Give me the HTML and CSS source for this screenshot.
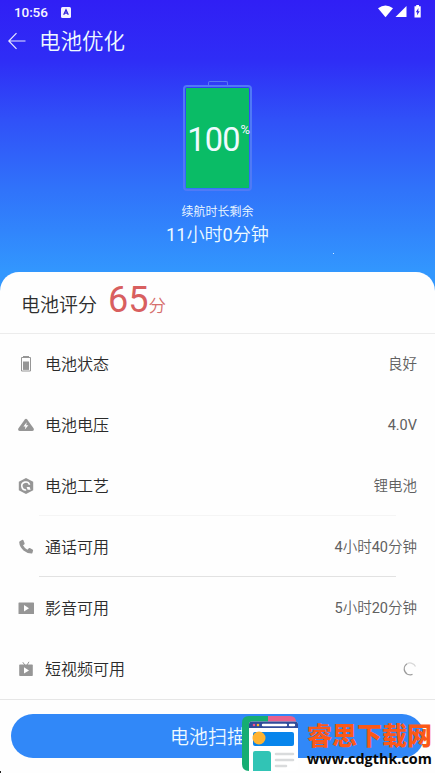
FILE: index.html
```html
<!DOCTYPE html>
<html lang="zh-CN">
<head>
<meta charset="utf-8">
<title>电池优化</title>
<link rel="stylesheet" href="styles.css">
</head>
<body>
<div class="screen">
  <header class="hero">
    <div class="status">
      <span class="time">10:56</span>
      <svg class="app-badge" width="10" height="11" viewBox="0 0 10 11"><rect width="10" height="11" rx="1.5" fill="#f4f2ff"/><path d="M2.7 7.8 5 2.8 7.3 7.8M3.6 6.2h2.8" fill="none" stroke="#3022d8" stroke-width="1.3"/></svg>
      <svg class="signals" width="45" height="14" viewBox="0 0 45 14" fill="#fff"><path d="M0 3.2Q7.5-2.2 15 3.2L7.5 12.2z"/><path d="M28.5 1v11H17.5z"/><path d="M36.5 1.2h1.7V0h2.8v1.2h1.7v11.3h-6.2z"/><path d="m40.5 3-2.7 4.2h1.5L38.9 10.5l2.8-4.3h-1.5z" fill="#3022e8"/></svg>
    </div>
    <div class="titlebar">
      <svg width="18" height="18" viewBox="0 0 18 18" fill="none" stroke="#e8e8ff" stroke-width="1.2"><path d="M17.5 9H1M8.5 1.2.8 9l7.7 7.8"/></svg>
      <h1>电池优化</h1>
    </div>
    <div class="battery">
      <div class="cap"></div>
      <div class="cell"><div class="charge"><span class="level">100</span><span class="percent">%</span></div></div>
    </div>
    <div class="remain-label">续航时长剩余</div>
    <div class="remain"><b>11</b>小时<b>0</b>分钟</div>
    <i class="speck"></i>
  </header>
  <main class="panel">
    <div class="score"><span class="score-label">电池评分</span><span class="score-num">65</span><span class="score-unit">分</span></div>
    <ul class="rows">
      <li><svg class="icon" viewBox="0 0 16 16" fill="#969696"><path d="M5 0h6v1.5H5z"/><path d="M3.5 1.5h9v13.5h-9z" fill="none" stroke="#969696"/><path d="M5 5.5h6v8.4H5z"/></svg><span class="name">电池状态</span><span class="value">良好</span></li>
      <li><svg class="icon" viewBox="0 0 16 16" fill="#969696"><path d="M6.8 2.4Q8 1 9.2 2.4L15.7 11.5Q16.3 14 14 14H2Q-.3 14 .3 11.5z"/><path d="M8.7 5.2 5.4 9.4h2.1l-.7 3.2 3.6-4.3H8.2z" fill="#fff"/></svg><span class="name">电池电压</span><span class="value"><b>4.0V</b></span></li>
      <li class="faint"><svg class="icon" viewBox="0 0 16 16"><path d="M8 0 15.2 3.8v8.4L8 16 .8 12.2V3.8z" fill="#969696"/><path d="M11.6 6.8A4 4 0 1 0 8.2 12" fill="none" stroke="#fff" stroke-width="1.6"/><path d="M8.6 9h3l1 2.8H9.6z" fill="#fff"/></svg><span class="name">电池工艺</span><span class="value">锂电池</span></li>
      <li class="ruled"><svg class="icon" viewBox="0 0 16 16"><path d="M1.8 2.2 4.4.8q.7-.2 1 .5l1.2 3q.2.7-.4 1.1L5 6.3q1.4 2.8 4.4 4.4l1.4-1.4q.5-.4 1-.2l2.7 1.4q.7.3.6 1l-.7 2.4q-.2.6-.9.6Q8.8 14.2 5.5 11.4 1.6 8 1.2 3.3 1.2 2.6 1.8 2.2z" fill="#969696"/></svg><span class="name">通话可用</span><span class="value"><b>4</b>小时<b>40</b>分钟</span></li>
      <li><svg class="icon" viewBox="0 0 16 16"><rect x=".5" y="2.5" width="15.5" height="11.5" rx=".6" fill="#969696"/><path d="m6 5 5 3.2L6 11.4z" fill="#fff"/></svg><span class="name">影音可用</span><span class="value"><b>5</b>小时<b>20</b>分钟</span></li>
      <li><svg class="icon" viewBox="0 0 16 16"><path d="m4.8 1.2 2 2.8M11 .8 9 4" stroke="#969696"/><rect x="1.2" y="3.6" width="13.6" height="11.4" rx=".8" fill="#969696"/><path d="m6 6.2 5 3.2-5 3.2z" fill="#fff"/></svg><span class="name">短视频可用</span><svg class="spinner" width="14" height="14" viewBox="0 0 14 14" fill="none" stroke-width="1.3"><path d="M9.5 12.4A6 6 0 0 1 4 1.8" stroke="#999"/><path d="M4 1.8A6 6 0 0 1 12.5 4.5" stroke="#d8d8d8"/></svg></li>
    </ul>
  </main>
  <footer class="actions"><button class="scan">电池扫描</button></footer>
  <div class="watermark">
    <svg width="58" height="56" viewBox="0 0 58 56">
      <path d="M8 0h20v55H8q-7 0-7-7V7Q1 0 8 0z" fill="#16ad72"/>
      <path d="M27 0h22q6 0 6 6H27z" fill="#e9608c"/>
      <path d="M11 5.5h43q3 0 3 3V51q0 4-4 4H8V8.5q0-3 3-3z" fill="#fff"/>
      <path d="M11 5.5h43q3 0 3 3V12H8V8.5q0-3 3-3z" fill="#304c9b"/>
      <circle cx="13" cy="9" r="1.3" fill="#f0528a"/><circle cx="17" cy="9" r="1.3" fill="#ffb62e"/>
      <path d="M22 9h23M49 9h4" stroke="#fff" stroke-width="2.4" stroke-linecap="round"/>
      <rect x="12" y="16" width="41" height="14" rx="2" fill="#0785ec"/>
      <circle cx="18" cy="22" r="6.5" fill="#ffb331"/>
      <path d="M14 35h13q3 0 3 3v17H12V37q0-2 2-2z" fill="#31c4b5"/>
      <path d="M35 38h17M35 44h17M35 50h10" stroke="#d9dbdc" stroke-width="2.6" stroke-linecap="round"/>
    </svg>
    <div class="brand"><strong>睿思下载网</strong><span>www.cdgthk.com</span></div>
  </div>
  <i class="corner"></i>
</div>
</body>
</html>
```
FILE: styles.css
```css
* { box-sizing: border-box; }
body { margin: 0; font-family: Roboto, "Noto Sans CJK SC", sans-serif; font-weight: 350; }
b { font-weight: 400; }
.screen { position: relative; width: 435px; height: 773px; overflow: hidden; background: #fefefe; display: flex; flex-direction: column; }
.hero { position: relative; height: 298px; flex: none; color: #effaff; background: linear-gradient(#301ff5 0, #2f2df6 60px, #3051f8 120px, #3073fa 190px, #3297fe 272px); display: flex; flex-direction: column; align-items: center; }
.status { width: 100%; height: 24px; padding: 0 13px 0 14px; display: flex; align-items: center; color: #f7f5ff; }
.time { font-size: 13.5px; font-weight: 500; line-height: 16px; width: 34px; letter-spacing: -.1px; }
.app-badge { margin-left: 13px; }
.signals { margin: 0 -1px 0 auto; }
.titlebar { width: 100%; height: 34px; padding-left: 8px; display: flex; align-items: center; gap: 13px; }
h1 { margin: 2px 0 0; font-size: 21.5px; font-weight: 350; line-height: 30px; }
.battery { margin-top: 23px; display: flex; flex-direction: column; align-items: center; }
.cap { width: 20px; height: 4px; border: 1.5px solid #5b76f5; border-bottom: 0; border-radius: 2px 2px 0 0; }
.cell { width: 69px; height: 106px; border: 2px solid #5079f6; border-radius: 4px; padding: 1px; }
.charge { height: 100%; background: #0abc66; display: flex; justify-content: center; align-items: center; white-space: nowrap; position: relative; }
.level { font-size: 32.5px; font-weight: 400; line-height: 36px; letter-spacing: -.8px; margin: 4px 8px 0 0; }
.percent { position: absolute; right: -1px; top: 34px; font-size: 13px; font-weight: 400; line-height: 16px; }
.remain-label { margin-top: 12px; font-size: 12px; line-height: 18px; }
.remain { font-size: 18.1px; line-height: 27px; }
.speck { position: absolute; left: 333px; top: 253px; width: 1px; height: 1px; background: #d4eaff; }
.panel { position: relative; margin-top: -26px; height: 427px; flex: none; background: #fefefe; border-radius: 19px 19px 0 0; }
.score { height: 62px; padding: 1px 0 0 21px; border-bottom: 1px solid #ececec; display: flex; align-items: baseline; color: #2e2e2e; line-height: 54px; }
.score-label { font-size: 19px; }
.score-num { margin-left: 11px; font-size: 36px; font-weight: 400; color: #d85f5f; }
.score-unit { font-size: 17.5px; color: #d66f6d; }
.rows { list-style: none; margin: 0; padding: 0; }
.rows li { height: 61px; padding: 0 18px; display: flex; align-items: center; position: relative; }
.icon { width: 16px; height: 16px; margin: -2px 11px 0 0; }
.name { font-size: 16px; line-height: 24px; color: #2b2b2b; }
.value { margin-left: auto; font-size: 14.5px; line-height: 24px; color: #606060; }
.faint::after, .ruled::after { content: ""; position: absolute; left: 39px; right: 39px; bottom: 1px; height: 1px; background: #f5f5f5; }
.ruled::after { background: #e2e2e2; }
.spinner { margin: -1px 0 0 auto; }
.actions { height: 74px; flex: none; border-top: 1px solid #e6e6e6; padding: 14px 11px; }
.scan { display: block; width: 100%; height: 44px; border: 0; border-radius: 22px; background: #3188f8; color: #effaff; font: 350 19px/44px Roboto, "Noto Sans CJK SC", sans-serif; padding: 2px 19px 0 0; }
.watermark { position: absolute; left: 241px; top: 716px; display: flex; }
.brand { margin-left: 8px; padding-top: 4px; display: flex; flex-direction: column; }
.brand strong { color: #fb5918; font: 900 25px/28px "Noto Sans CJK SC", sans-serif; }
.brand span { color: #080808; font: 700 14.4px/22px "Open Sans", "Noto Sans", sans-serif; white-space: nowrap; }
.corner { position: absolute; left: 0; bottom: 0; width: 1px; height: 2px; background: #222; }
```
